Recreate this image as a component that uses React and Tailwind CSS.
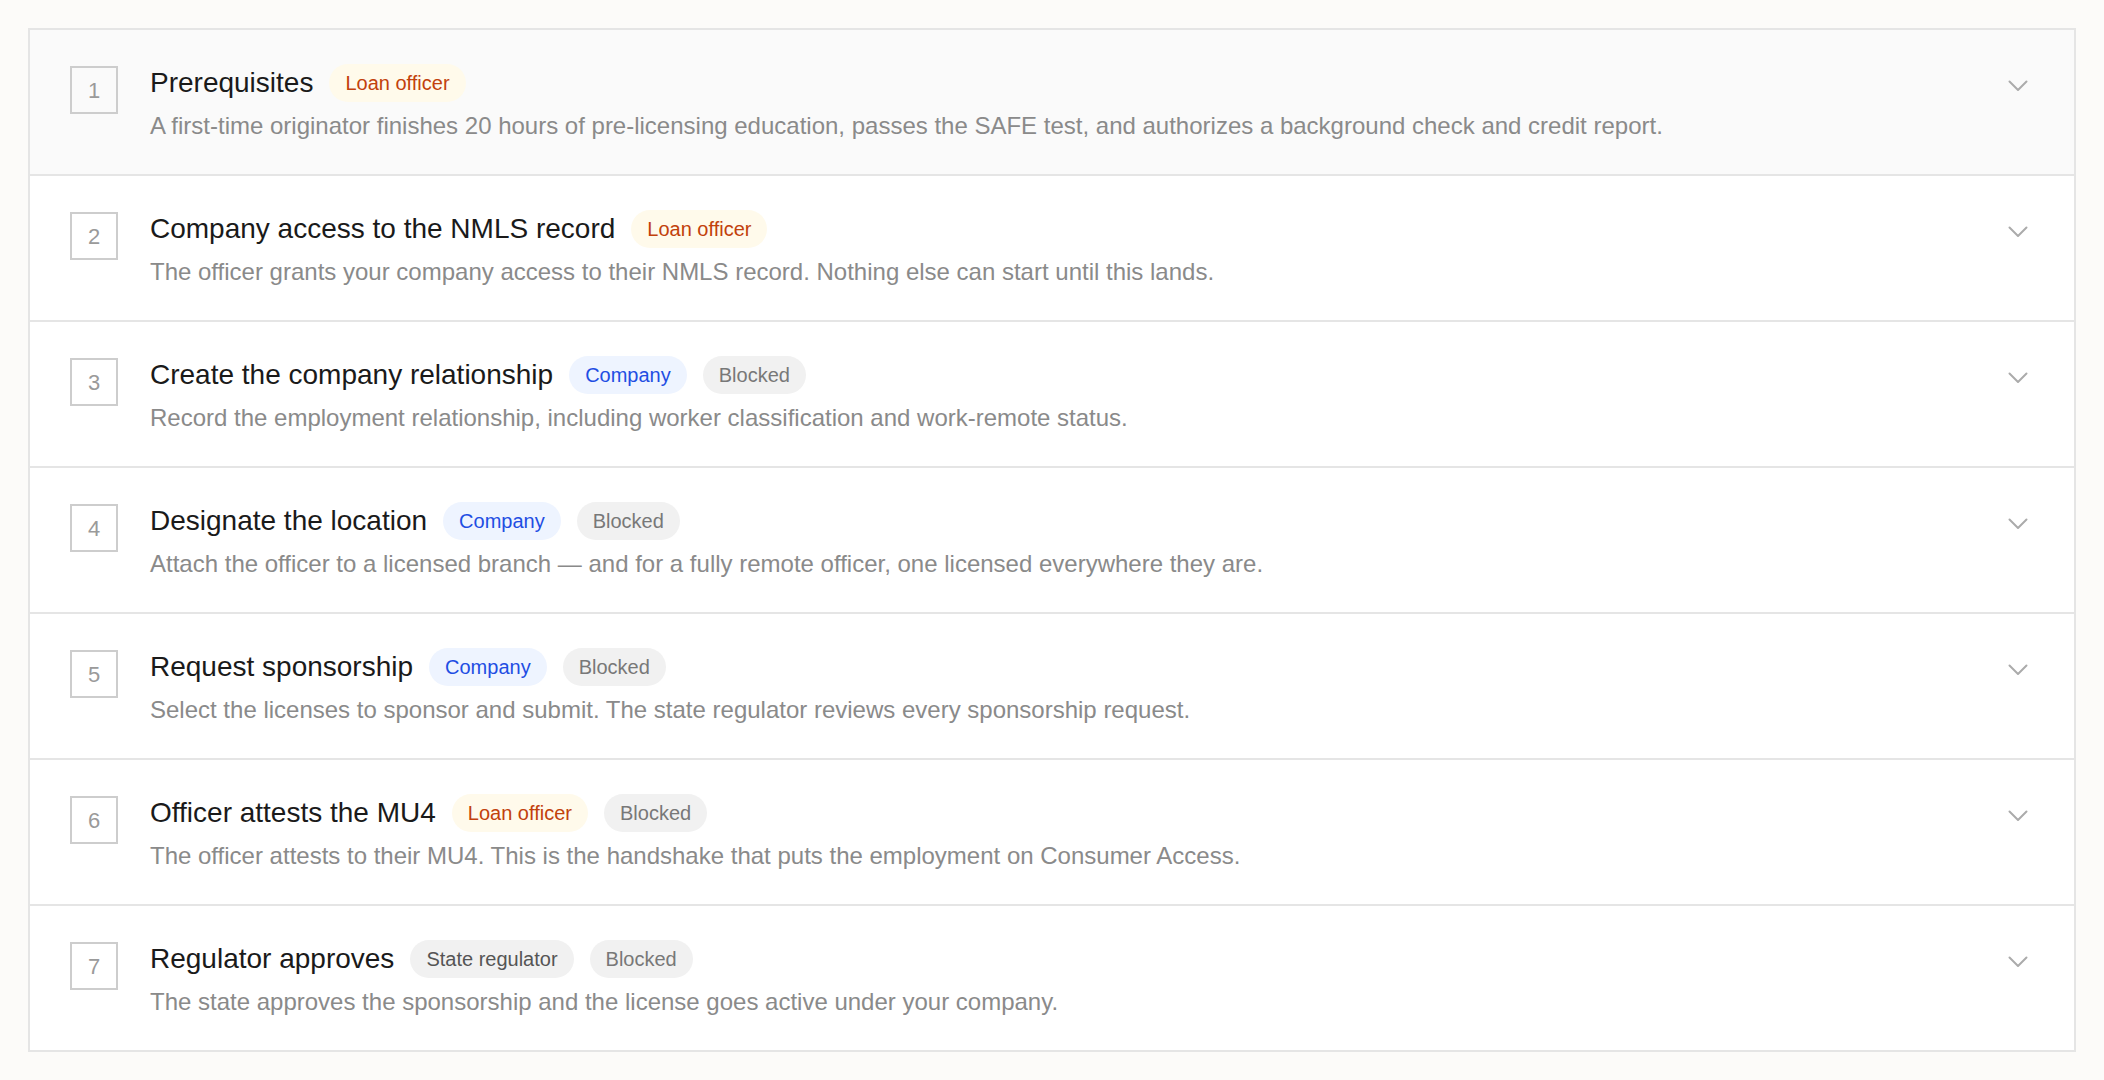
import React from "react";

const tones = {
  officer: "bg-[#fffaeb] text-[#c2410c]",
  company: "bg-[#eef4ff] text-[#1f4ee3]",
  blocked: "bg-[#f1f1f1] text-[#787878]",
  regulator: "bg-[#f1f1f1] text-[#555555]",
};

const steps = [
  {
    title: "Prerequisites",
    tags: [["Loan officer", "officer"]],
    body: "A first-time originator finishes 20 hours of pre-licensing education, passes the SAFE test, and authorizes a background check and credit report.",
    active: true,
  },
  {
    title: "Company access to the NMLS record",
    tags: [["Loan officer", "officer"]],
    body: "The officer grants your company access to their NMLS record. Nothing else can start until this lands.",
  },
  {
    title: "Create the company relationship",
    tags: [["Company", "company"], ["Blocked", "blocked"]],
    body: "Record the employment relationship, including worker classification and work-remote status.",
  },
  {
    title: "Designate the location",
    tags: [["Company", "company"], ["Blocked", "blocked"]],
    body: "Attach the officer to a licensed branch — and for a fully remote officer, one licensed everywhere they are.",
  },
  {
    title: "Request sponsorship",
    tags: [["Company", "company"], ["Blocked", "blocked"]],
    body: "Select the licenses to sponsor and submit. The state regulator reviews every sponsorship request.",
  },
  {
    title: "Officer attests the MU4",
    tags: [["Loan officer", "officer"], ["Blocked", "blocked"]],
    body: "The officer attests to their MU4. This is the handshake that puts the employment on Consumer Access.",
  },
  {
    title: "Regulator approves",
    tags: [["State regulator", "regulator"], ["Blocked", "blocked"]],
    body: "The state approves the sponsorship and the license goes active under your company.",
  },
];

function Chevron() {
  return (
    <svg width="20" height="12" viewBox="0 0 20 12" fill="none" className="text-[#ababab]">
      <polyline points="1.5 1.5 10 10 18.5 1.5" stroke="currentColor" strokeWidth="2" strokeLinecap="round" strokeLinejoin="round" />
    </svg>
  );
}

function Step({ n, step }) {
  return (
    <div className={`flex items-start pl-10 pr-[46px] pt-[34px] pb-8 ${step.active ? "bg-[#fafafa]" : "bg-white"}`}>
      <div className="mt-[2px] w-12 h-12 shrink-0 border-2 border-[#cdcdcd] flex items-center justify-center text-[22px] text-[#9a9a9a]">
        {n}
      </div>
      <div className="ml-8 flex-1 min-w-0">
        <div className="flex items-center gap-4 h-[38px]">
          <h3 className="text-[28px] leading-[38px] text-[#1a1a1a]">{step.title}</h3>
          {step.tags.map(([label, tone]) => (
            <span key={label} className={`rounded-full px-4 h-[38px] flex items-center text-[20px] leading-7 ${tones[tone]}`}>
              {label}
            </span>
          ))}
        </div>
        <p className="mt-2 text-[24px] leading-8 text-[#8a8a8a]">{step.body}</p>
      </div>
      <div className="mt-4 shrink-0">
        <Chevron />
      </div>
    </div>
  );
}

export default function App() {
  return (
    <div className="min-h-screen bg-[#fcfbf9] p-7" style={{ fontFamily: '"Liberation Sans", Arial, sans-serif' }}>
      <div className="border-2 border-[#e5e5e5] divide-y-2 divide-[#e5e5e5] bg-white">
        {steps.map((s, i) => (
          <Step key={i} n={i + 1} step={s} />
        ))}
      </div>
    </div>
  );
}
